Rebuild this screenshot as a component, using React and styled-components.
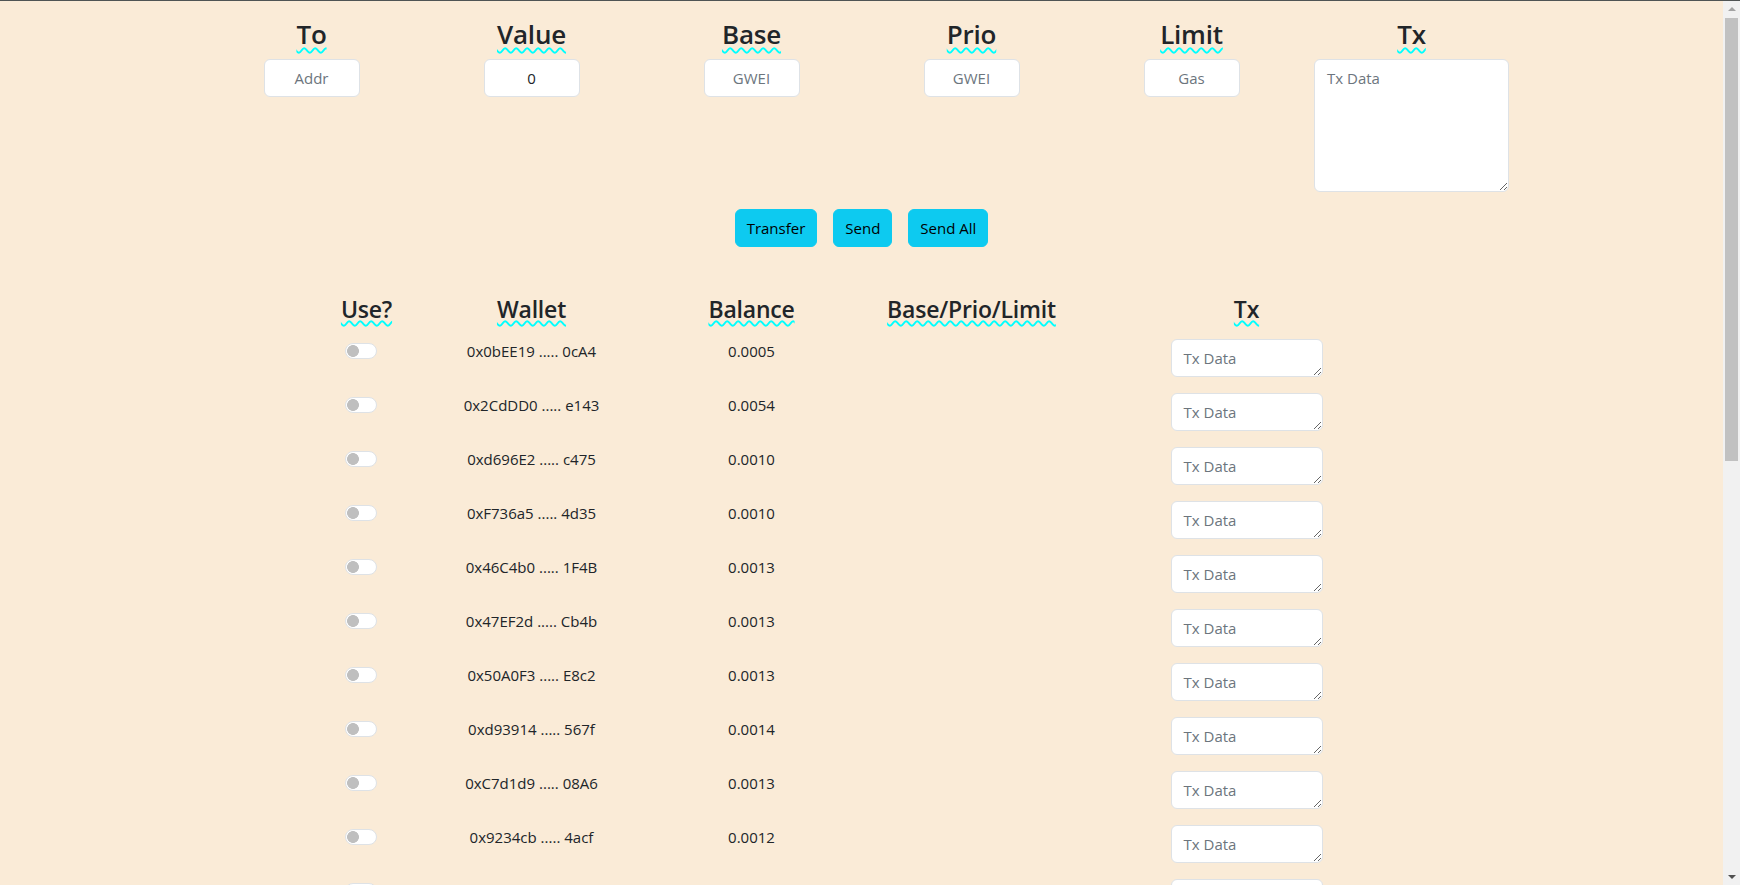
import React from 'react';
import styled, { createGlobalStyle } from 'styled-components';

const GlobalStyle = createGlobalStyle`
  *, *::before, *::after { box-sizing: border-box; }
  html { scrollbar-width: none; }
  html::-webkit-scrollbar { display: none; }
  html, body { margin: 0; padding: 0; }
  body {
    padding-right: 17px;
    background: #faebd7;
    color: #212529;
    font-family: "Open Sans", "Noto Sans", sans-serif;
    font-size: 15px;
    line-height: 24px;
  }
`;

const TopEdge = styled.div`
  position: fixed;
  top: 0;
  left: 0;
  right: 0;
  height: 1px;
  background: #4f5454;
  z-index: 10;
`;

const FakeScrollbar = styled.div`
  position: fixed;
  top: 0;
  right: 0;
  bottom: 0;
  width: 17px;
  background: #f1f1f1;
  display: flex;
  flex-direction: column;
  z-index: 5;
`;

const ScrollArrow = styled.div`
  flex: none;
  height: 17px;
  display: flex;
  align-items: center;
  justify-content: center;
  &::before {
    content: '';
    border-left: 4px solid transparent;
    border-right: 4px solid transparent;
    ${p => (p.$down ? 'border-top: 4px solid #505050;' : 'border-bottom: 4px solid #a3a3a3;')}
  }
`;

const ScrollTrack = styled.div`
  flex: 1;
  padding: 1px 2px;
`;

const ScrollThumb = styled.div`
  height: 443px;
  background: #c1c1c1;
`;

const Container = styled.main`
  width: 1320px;
  margin: 0 auto;
  padding-top: 18px;
  padding-bottom: 11px;
`;

const TopGrid = styled.section`
  display: grid;
  grid-template-columns: repeat(6, 220px);
  align-items: start;
`;

const Field = styled.div`
  display: flex;
  flex-direction: column;
  align-items: center;
  gap: 8px;
`;

const Heading = styled.h3`
  margin: 0;
  font-size: 26px;
  font-weight: 600;
  line-height: 33px;
  letter-spacing: -0.2px;
  color: #212529;
  text-decoration: underline wavy #00ffff;
  text-decoration-thickness: 1.5px;
  text-underline-offset: 3px;
`;

const SubHeading = styled.h4`
  margin: 0;
  font-size: 23px;
  font-weight: 600;
  line-height: 29px;
  letter-spacing: -0.2px;
  color: #212529;
  text-decoration: underline wavy #00ffff;
  text-decoration-thickness: 1.5px;
  text-underline-offset: 2px;
`;

const TextInput = styled.input`
  width: 96px;
  height: 38px;
  padding: 6px 12px;
  border: 1px solid #dee2e6;
  border-radius: 6px;
  background: #fff;
  font-family: inherit;
  font-size: 15px;
  color: #212529;
  text-align: center;
  outline: none;
  &::placeholder { color: #6c757d; opacity: 1; }
`;

const TxArea = styled.textarea`
  display: block;
  width: ${p => p.$w}px;
  height: ${p => p.$h}px;
  padding: 6px 12px;
  border: 1px solid #dee2e6;
  border-radius: 6px;
  background: #fff;
  font-family: inherit;
  font-size: 15px;
  line-height: 24px;
  color: #212529;
  outline: none;
  resize: vertical;
  &::placeholder { color: #6c757d; opacity: 1; }
`;

const ButtonBar = styled.div`
  display: flex;
  justify-content: center;
  gap: 16px;
  margin-top: 17px;
`;

const ActionButton = styled.button`
  height: 38px;
  padding: 6px 11px;
  border: 1px solid #0dcaf0;
  border-radius: 6px;
  background: #0dcaf0;
  color: #000;
  font-family: inherit;
  font-size: 15px;
  line-height: 24px;
  cursor: pointer;
`;

const WalletTable = styled.section`
  margin-top: 48px;
  padding-left: 110px;
`;

const TableRow = styled.div`
  display: grid;
  grid-template-columns: 110px 220px 220px 220px 330px;
  align-items: start;
  margin-bottom: ${p => (p.$head ? 15 : 16)}px;
`;

const HeadCell = styled.div`
  display: flex;
  justify-content: center;
`;

const SwitchCell = styled.div`
  display: flex;
  justify-content: center;
  padding-right: 12px;
`;

const Switch = styled.input.attrs({ type: 'checkbox' })`
  appearance: none;
  -webkit-appearance: none;
  margin: 4px 0 0;
  width: 32px;
  height: 16px;
  border: 1px solid #dee2e6;
  border-radius: 16px;
  background: radial-gradient(circle at 7px 50%, #bfbfbf 5.6px, rgba(191,191,191,0) 6.2px), #fff;
  cursor: pointer;
`;

const TextCell = styled.div`
  text-align: center;
  line-height: 24px;
  font-size: 15px;
`;

const TxCell = styled.div`
  display: flex;
  justify-content: center;
`;

const visible = [
  ['0x0bEE19', '0cA4', '0.0005'],
  ['0x2CdDD0', 'e143', '0.0054'],
  ['0xd696E2', 'c475', '0.0010'],
  ['0xF736a5', '4d35', '0.0010'],
  ['0x46C4b0', '1F4B', '0.0013'],
  ['0x47EF2d', 'Cb4b', '0.0013'],
  ['0x50A0F3', 'E8c2', '0.0013'],
  ['0xd93914', '567f', '0.0014'],
  ['0xC7d1d9', '08A6', '0.0013'],
  ['0x9234cb', '4acf', '0.0012'],
];

const HEX = '0123456789abcdefABCDEF';
function makeRows() {
  const rows = [...visible];
  let seed = 7;
  const rnd = () => {
    seed = (seed * 9301 + 49297) % 233280;
    return seed / 233280;
  };
  const hex = n => Array.from({ length: n }, () => HEX[Math.floor(rnd() * HEX.length)]).join('');
  while (rows.length < 25) {
    rows.push(['0x' + hex(6), hex(4), (0.001 + rnd() * 0.004).toFixed(4)]);
  }
  return rows;
}
const wallets = makeRows();

const topFields = [
  { label: 'To', placeholder: 'Addr' },
  { label: 'Value', value: '0' },
  { label: 'Base', placeholder: 'GWEI' },
  { label: 'Prio', placeholder: 'GWEI' },
  { label: 'Limit', placeholder: 'Gas' },
];

export default function App() {
  return (
    <>
      <GlobalStyle />
      <TopEdge />
      <FakeScrollbar aria-hidden="true">
        <ScrollArrow />
        <ScrollTrack><ScrollThumb /></ScrollTrack>
        <ScrollArrow $down />
      </FakeScrollbar>
      <Container>
        <TopGrid>
          {topFields.map(f => (
            <Field key={f.label}>
              <Heading>{f.label}</Heading>
              {f.value !== undefined ? (
                <TextInput defaultValue={f.value} />
              ) : (
                <TextInput placeholder={f.placeholder} />
              )}
            </Field>
          ))}
          <Field>
            <Heading>Tx</Heading>
            <TxArea $w={195} $h={133} placeholder="Tx Data" />
          </Field>
        </TopGrid>

        <ButtonBar>
          <ActionButton>Transfer</ActionButton>
          <ActionButton>Send</ActionButton>
          <ActionButton>Send All</ActionButton>
        </ButtonBar>

        <WalletTable>
          <TableRow $head>
            <HeadCell><SubHeading>Use?</SubHeading></HeadCell>
            <HeadCell><SubHeading>Wallet</SubHeading></HeadCell>
            <HeadCell><SubHeading>Balance</SubHeading></HeadCell>
            <HeadCell><SubHeading>Base/Prio/Limit</SubHeading></HeadCell>
            <HeadCell><SubHeading>Tx</SubHeading></HeadCell>
          </TableRow>
          {wallets.map(([a, b, bal], i) => (
            <TableRow key={i}>
              <SwitchCell><Switch /></SwitchCell>
              <TextCell>{a} ..... {b}</TextCell>
              <TextCell>{bal}</TextCell>
              <TextCell />
              <TxCell><TxArea $w={152} $h={38} placeholder="Tx Data" /></TxCell>
            </TableRow>
          ))}
        </WalletTable>
      </Container>
    </>
  );
}
